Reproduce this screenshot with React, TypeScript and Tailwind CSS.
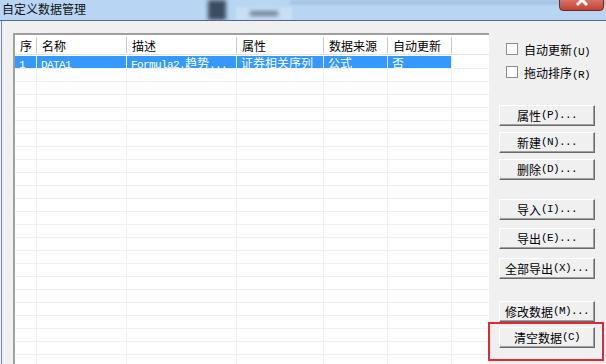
import React from "react";

const CJK = '"Noto Sans CJK SC", "Noto Sans", sans-serif';
const LAT = '"Liberation Mono", "DejaVu Sans Mono", monospace';

// SimSun-like mixed text: half-width latin, full-width CJK
const Txt: React.FC<{ s: string }> = ({ s }) => (
  <>
    {s.split(/([\x00-\x7f]+)/).filter(Boolean).map((part, i) =>
      /^[\x00-\x7f]+$/.test(part) ? (
        <span key={i} className="text-[11px] tracking-[-0.6px]" style={{ fontFamily: LAT }}>
          {part}
        </span>
      ) : (
        <span key={i} className="text-[12px]" style={{ fontFamily: CJK }}>
          {part}
        </span>
      )
    )}
  </>
);

const cols = [22, 90, 110, 87, 64, 64];
const header = ["序", "名称", "描述", "属性", "数据来源", "自动更新"];
const first = ["1", "DATA1", "Formula2.趋势...", "证券相关序列", "公式", "否"];

const Btn: React.FC<{ label: string; className?: string }> = ({ label, className = "" }) => (
  <div
    className={`w-[96px] h-[21px] flex items-center justify-center bg-[#f0f0f0] border-t border-l border-white border-r border-b border-r-[#696969] border-b-[#696969] shadow-[inset_-1px_-1px_0_#a0a0a0] text-black leading-none ${className}`}
  >
    <Txt s={label} />
  </div>
);

const Check: React.FC<{ label: string; className?: string }> = ({ label, className = "" }) => (
  <div className={`flex items-center h-[12px] ${className}`}>
    <div className="w-[12px] h-[12px] border border-[#8e8f8f] bg-white" />
    <div className="ml-[6px] leading-none text-black whitespace-nowrap">
      <Txt s={label} />
    </div>
  </div>
);

export default function App() {
  const rows = Array.from({ length: 26 });
  return (
    <div className="relative w-[606px] h-[364px] overflow-hidden bg-[#f0f0f0] flex flex-col">
      {/* title bar */}
      <div className="relative h-[21px] shrink-0 bg-[#b8d6f4] border-b border-[#56677f] overflow-hidden">
        <div className="absolute left-[290px] right-0 top-0 h-[5px] bg-[#a7c6e6] blur-[1px]" />
        <div className="absolute left-[208px] top-0 w-[18px] h-[20px] bg-[#3c4c60] blur-[2px]" />
        <div className="absolute left-[236px] top-[7px] w-[56px] h-[13px] bg-[#c9dff3] blur-[1px]" />
        <div className="absolute left-[250px] top-[11px] w-[28px] h-[5px] bg-[#6b7f96] blur-[2px]" />
        <div
          className="relative pl-[2px] pt-[1px] text-[12px] leading-[16px] text-[#111]"
          style={{ fontFamily: CJK }}
        >
          自定义数据管理
        </div>
        <div className="absolute left-[559px] top-[-2px] w-[45px] h-[13px] rounded-b-[4px] border border-[#6e2a22] bg-gradient-to-b from-[#d9776a] to-[#c2402f] flex justify-center overflow-hidden">
          <svg width="14" height="14" viewBox="0 0 14 14" className="-mt-[6px]">
            <path d="M2 2 L12 12 M12 2 L2 12" stroke="#ffffff" strokeWidth="3" />
          </svg>
        </div>
      </div>

      {/* body */}
      <div className="flex-1 flex ml-[1px] border-l border-[#7088aa] min-h-0">
        {/* list */}
        <div className="ml-[11px] mt-[12px] w-[476px] border-t-2 border-l-2 border-[#a0a0a0] bg-white flex flex-col overflow-hidden">
          <div className="flex h-[20px] shrink-0 border-b border-[#e3e3e3]">
            {header.map((h, i) => (
              <div
                key={h}
                className="flex items-center justify-between h-full text-black"
                style={{ width: cols[i] }}
              >
                <span className="pl-[5px] leading-none">
                  <Txt s={h} />
                </span>
                <div className="w-px h-[16px] bg-[#c8c8c8]" />
              </div>
            ))}
            <div className="flex-1" />
          </div>
          <div className="pt-[1px]">
            {rows.map((_, r) => (
              <div key={r} className="flex h-[13px] border-b border-[#f0f0f0]">
                {cols.map((w, i) => (
                  <div
                    key={i}
                    className={`h-full border-r border-[#f0f0f0] flex items-center whitespace-nowrap leading-none ${
                      r === 0 ? "bg-[#3399ff] text-white" : ""
                    }`}
                    style={{ width: w }}
                  >
                    {r === 0 && (
                      <span className="pl-[4px]">
                        <Txt s={first[i]} />
                      </span>
                    )}
                  </div>
                ))}
                <div className="flex-1" />
              </div>
            ))}
          </div>
        </div>

        {/* right panel */}
        <div className="flex-1 flex flex-col">
          <div className="pl-[17px] pt-[22px]">
            <Check label="自动更新(U)" />
            <Check label="拖动排序(R)" className="mt-[11px]" />
          </div>
          <div className="pl-[10px] flex flex-col">
            <Btn label="属性(P)..." className="mt-[27px]" />
            <Btn label="新建(N)..." className="mt-[6px]" />
            <Btn label="删除(D)..." className="mt-[6px]" />
            <Btn label="导入(I)..." className="mt-[19px]" />
            <Btn label="导出(E)..." className="mt-[8px]" />
            <Btn label="全部导出(X)..." className="mt-[9px]" />
            <Btn label="修改数据(M)..." className="mt-[22px]" />
            <Btn label="清空数据(C)" className="mt-[5px]" />
          </div>
        </div>
      </div>

      {/* annotation */}
      <div className="absolute left-[488px] top-[322px] w-[116px] h-[39px] border-2 border-[#e02a33]" />
    </div>
  );
}
